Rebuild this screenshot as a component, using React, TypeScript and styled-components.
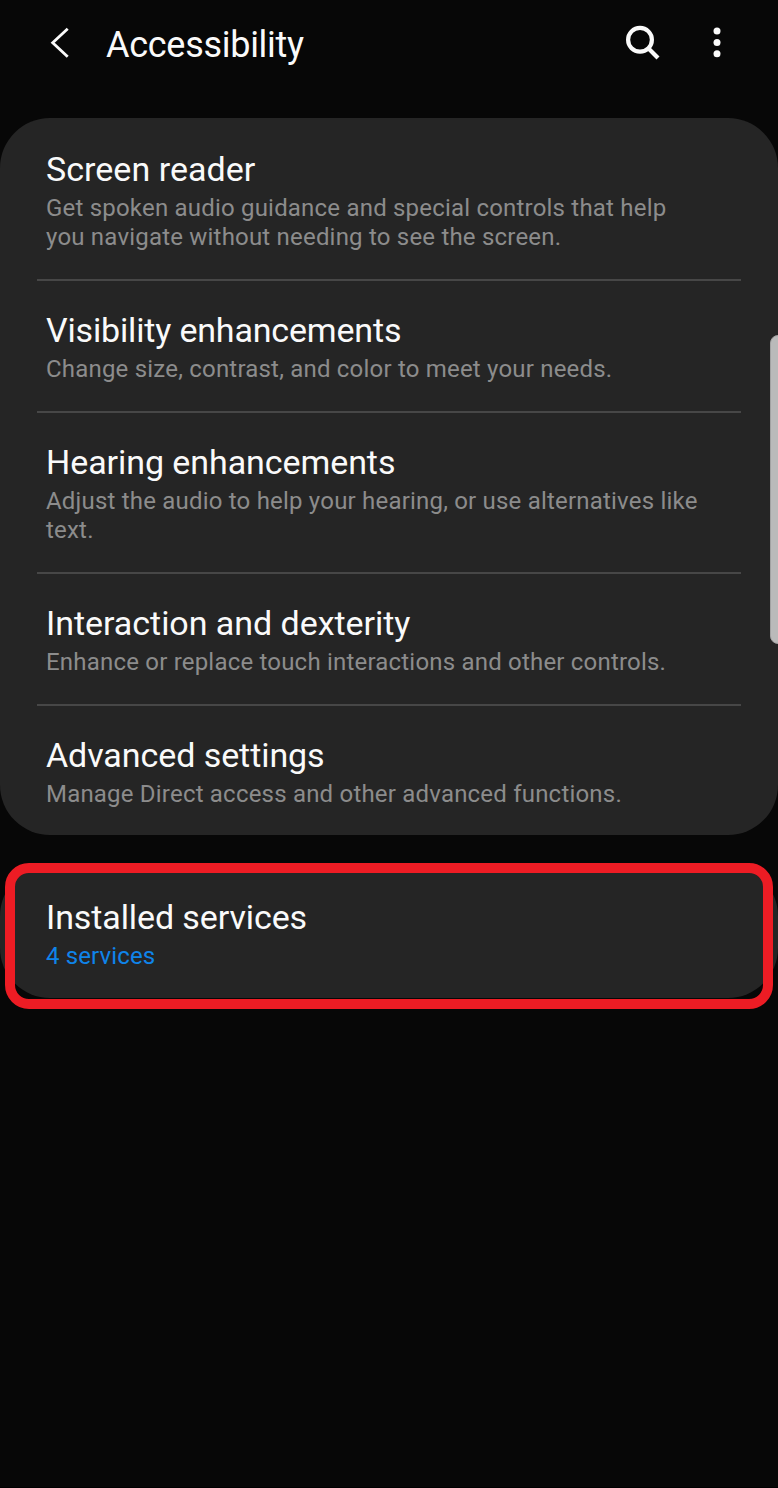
import React from "react";
import styled, { createGlobalStyle } from "styled-components";

const GlobalStyle = createGlobalStyle`
  * { box-sizing: border-box; }
  body { margin: 0; background: #070707; font-family: Roboto, "Liberation Sans", sans-serif; }
`;
const Screen = styled.main`
  position: relative;
  width: 778px;
  height: 1488px;
  overflow: hidden;
  background: #070707;
  border-bottom: 1px solid #000;
`;
const Header = styled.header`
  display: flex;
  align-items: center;
  height: 118px;
  padding: 0 46px 32px 46px;
`;
const Title = styled.h1`
  flex: 1;
  margin: 0;
  font-size: 36px;
  line-height: 44px;
  font-weight: 400;
  letter-spacing: -0.28px;
  color: #fafafa;
  padding: 4px 0 0 32px;
`;
const IconButton = styled.button<{ $w: number; $gap?: number }>`
  display: block;
  width: ${(p) => p.$w}px;
  height: 40px;
  margin: 0 0 0 ${(p) => p.$gap ?? 0}px;
  padding: 0;
  border: 0;
  background: none;
  color: #fafafa;
`;
const Card = styled.section<{ $gap?: number }>`
  margin-top: ${(p) => p.$gap ?? 0}px;
  border-radius: 50px;
  background: #252525;
`;
const Row = styled.div<{ $height: number }>`
  height: ${(p) => p.$height}px;
  margin: 0 37px;
  padding: 30px 8px 0 9px;
  & + & {
    padding-top: 28px;
    border-top: 2px solid #474747;
  }
`;
const Label = styled.h2<{ $tracking: number }>`
  margin: 0;
  font-size: 34px;
  line-height: 42px;
  font-weight: 400;
  letter-spacing: ${(p) => p.$tracking}px;
  color: #fafafa;
`;
const Summary = styled.p<{ $accent?: boolean }>`
  margin: 4px 0 0;
  font-size: 24px;
  line-height: 29px;
  letter-spacing: ${(p) => (p.$accent ? 0.12 : 0.2)}px;
  white-space: pre;
  color: ${(p) => (p.$accent ? "#0f84ea" : "#8c8c8c")};
`;
const Scrollbar = styled.div`
  position: absolute;
  top: 335px;
  right: -8px;
  width: 16px;
  height: 309px;
  border: 1px solid #a2a2a2;
  border-radius: 8px;
  background: #bababa;
`;
const Highlight = styled.div`
  position: absolute;
  left: 5px;
  top: 863px;
  width: 768px;
  height: 146px;
  border: 10px solid #ed1c24;
  border-radius: 24px;
`;

const rows = [
  { label: "Screen reader", height: 161, tracking: 0.03, text: "Get spoken audio guidance and special controls that help\nyou navigate without needing to see the screen." },
  { label: "Visibility enhancements", height: 132, tracking: -0.17, text: "Change size, contrast, and color to meet your needs." },
  { label: "Hearing enhancements", height: 161, tracking: -0.07, text: "Adjust the audio to help your hearing, or use alternatives like\ntext." },
  { label: "Interaction and dexterity", height: 132, tracking: -0.04, text: "Enhance or replace touch interactions and other controls." },
  { label: "Advanced settings", height: 131, tracking: -0.07, text: "Manage Direct access and other advanced functions." },
];

export default function App() {
  return (
    <Screen>
      <GlobalStyle />
      <Header>
        <IconButton $w={28} aria-label="Back">
          <svg width="28" height="40" viewBox="0 0 28 40" fill="none" stroke="currentColor" strokeWidth="2.8">
            <path d="M21.7 5.7 6.7 19.7 21.7 33.7" />
          </svg>
        </IconButton>
        <Title>Accessibility</Title>
        <IconButton $w={40} aria-label="Search">
          <svg width="40" height="40" viewBox="0 0 40 40" fill="none" stroke="currentColor" strokeWidth="4.2">
            <circle cx="18" cy="16.8" r="11.9" />
            <path d="m26.3 25.3 9.7 9.7" />
          </svg>
        </IconButton>
        <IconButton $w={30} $gap={40} aria-label="More options">
          <svg width="30" height="40" viewBox="0 0 30 40" fill="currentColor">
            <circle cx="15" cy="8" r="3.5" />
            <circle cx="15" cy="19.4" r="3.5" />
            <circle cx="15" cy="30.8" r="3.5" />
          </svg>
        </IconButton>
      </Header>
      <Card>
        {rows.map((r) => (
          <Row key={r.label} $height={r.height}>
            <Label $tracking={r.tracking}>{r.label}</Label>
            <Summary>{r.text}</Summary>
          </Row>
        ))}
      </Card>
      <Card $gap={31}>
        <Row $height={132}>
          <Label $tracking={-0.1}>Installed services</Label>
          <Summary $accent>4 services</Summary>
        </Row>
      </Card>
      <Scrollbar />
      <Highlight />
    </Screen>
  );
}
